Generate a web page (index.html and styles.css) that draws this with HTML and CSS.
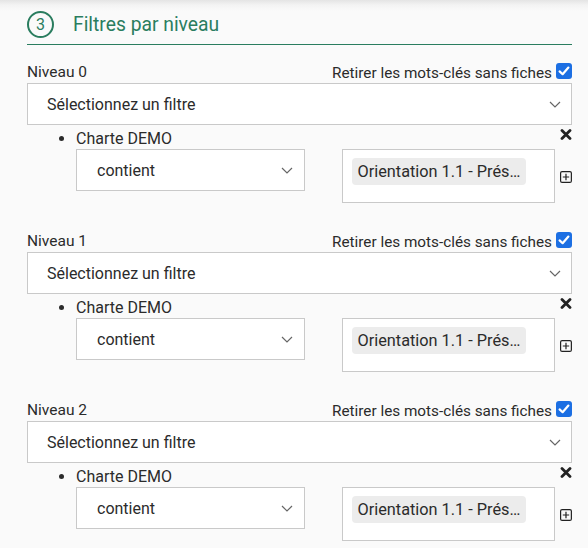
FILE: index.html
```html
<!DOCTYPE html>
<html lang="fr">
<head>
<meta charset="utf-8">
<title>Filtres par niveau</title>
<link rel="stylesheet" href="styles.css">
</head>
<body>
<div class="page">
  <div class="panel">
    <div class="header">
      <span class="step">3</span>
      <h2 class="title">Filtres par niveau</h2>
    </div>

    <div class="level">
      <div class="level-head">
        <span class="level-name">Niveau 0</span>
        <label class="remove">Retirer les mots-clés sans fiches
          <svg class="check" width="16" height="16" viewBox="0 0 16 16"><rect x="0" y="0" width="16" height="16" rx="3" fill="#1c6fe3"/><path d="M3.6 8.4 L6.6 11.2 L12.4 4.6" fill="none" stroke="#fff" stroke-width="2.2" stroke-linecap="round" stroke-linejoin="round"/></svg>
        </label>
      </div>
      <div class="select wide"><span>Sélectionnez un filtre</span><svg class="chev" width="12" height="7" viewBox="0 0 12 7"><path d="M1 1 L6 6 L11 1" fill="none" stroke="#666" stroke-width="1.2"/></svg></div>
      <ul class="rules">
        <li class="rule">
          <div class="rule-name">Charte DEMO</div>
          <svg class="del" width="12" height="11" viewBox="0 0 12 11"><path d="M2 1.5 L10 9.5 M10 1.5 L2 9.5" stroke="#222" stroke-width="2.8" stroke-linecap="round"/></svg>
          <div class="rule-row">
            <div class="select op"><span>contient</span><svg class="chev" width="12" height="7" viewBox="0 0 12 7"><path d="M1 1 L6 6 L11 1" fill="none" stroke="#666" stroke-width="1.2"/></svg></div>
            <div class="values"><span class="tag">Orientation 1.1 - Prés…</span></div>
            <svg class="add" width="12" height="12" viewBox="0 0 12 12"><rect x="0.6" y="0.6" width="10.8" height="10.8" rx="1.5" fill="none" stroke="#222" stroke-width="1.2"/><path d="M6 2.8 V9.2 M2.8 6 H9.2" stroke="#222" stroke-width="1.2"/></svg>
          </div>
        </li>
      </ul>
    </div>

    <div class="level">
      <div class="level-head">
        <span class="level-name">Niveau 1</span>
        <label class="remove">Retirer les mots-clés sans fiches
          <svg class="check" width="16" height="16" viewBox="0 0 16 16"><rect x="0" y="0" width="16" height="16" rx="3" fill="#1c6fe3"/><path d="M3.6 8.4 L6.6 11.2 L12.4 4.6" fill="none" stroke="#fff" stroke-width="2.2" stroke-linecap="round" stroke-linejoin="round"/></svg>
        </label>
      </div>
      <div class="select wide"><span>Sélectionnez un filtre</span><svg class="chev" width="12" height="7" viewBox="0 0 12 7"><path d="M1 1 L6 6 L11 1" fill="none" stroke="#666" stroke-width="1.2"/></svg></div>
      <ul class="rules">
        <li class="rule">
          <div class="rule-name">Charte DEMO</div>
          <svg class="del" width="12" height="11" viewBox="0 0 12 11"><path d="M2 1.5 L10 9.5 M10 1.5 L2 9.5" stroke="#222" stroke-width="2.8" stroke-linecap="round"/></svg>
          <div class="rule-row">
            <div class="select op"><span>contient</span><svg class="chev" width="12" height="7" viewBox="0 0 12 7"><path d="M1 1 L6 6 L11 1" fill="none" stroke="#666" stroke-width="1.2"/></svg></div>
            <div class="values"><span class="tag">Orientation 1.1 - Prés…</span></div>
            <svg class="add" width="12" height="12" viewBox="0 0 12 12"><rect x="0.6" y="0.6" width="10.8" height="10.8" rx="1.5" fill="none" stroke="#222" stroke-width="1.2"/><path d="M6 2.8 V9.2 M2.8 6 H9.2" stroke="#222" stroke-width="1.2"/></svg>
          </div>
        </li>
      </ul>
    </div>

    <div class="level">
      <div class="level-head">
        <span class="level-name">Niveau 2</span>
        <label class="remove">Retirer les mots-clés sans fiches
          <svg class="check" width="16" height="16" viewBox="0 0 16 16"><rect x="0" y="0" width="16" height="16" rx="3" fill="#1c6fe3"/><path d="M3.6 8.4 L6.6 11.2 L12.4 4.6" fill="none" stroke="#fff" stroke-width="2.2" stroke-linecap="round" stroke-linejoin="round"/></svg>
        </label>
      </div>
      <div class="select wide"><span>Sélectionnez un filtre</span><svg class="chev" width="12" height="7" viewBox="0 0 12 7"><path d="M1 1 L6 6 L11 1" fill="none" stroke="#666" stroke-width="1.2"/></svg></div>
      <ul class="rules">
        <li class="rule">
          <div class="rule-name">Charte DEMO</div>
          <svg class="del" width="12" height="11" viewBox="0 0 12 11"><path d="M2 1.5 L10 9.5 M10 1.5 L2 9.5" stroke="#222" stroke-width="2.8" stroke-linecap="round"/></svg>
          <div class="rule-row">
            <div class="select op"><span>contient</span><svg class="chev" width="12" height="7" viewBox="0 0 12 7"><path d="M1 1 L6 6 L11 1" fill="none" stroke="#666" stroke-width="1.2"/></svg></div>
            <div class="values"><span class="tag">Orientation 1.1 - Prés…</span></div>
            <svg class="add" width="12" height="12" viewBox="0 0 12 12"><rect x="0.6" y="0.6" width="10.8" height="10.8" rx="1.5" fill="none" stroke="#222" stroke-width="1.2"/><path d="M6 2.8 V9.2 M2.8 6 H9.2" stroke="#222" stroke-width="1.2"/></svg>
          </div>
        </li>
      </ul>
    </div>
  </div>
</div>
</body>
</html>
```

FILE: styles.css
```css
html, body {
  margin: 0;
  padding: 0;
}
body {
  font-family: Roboto, "Liberation Sans", sans-serif;
  color: #2b2b2b;
  background: #fafafa;
}
.page {
  min-height: 548px;
  background: linear-gradient(to bottom, #e4e4e4 0px, #f3f3f3 5px, #fafafa 11px, #fafafa 100%);
  padding: 11px 16px 0 27px;
}
.panel {
  width: 545px;
}
.header {
  display: flex;
  align-items: center;
  gap: 19px;
  height: 27px;
  padding-bottom: 6px;
  border-bottom: 1.5px solid #2a7d5f;
}
.step {
  box-sizing: border-box;
  width: 27px;
  height: 27px;
  border: 2px solid #2a7d5f;
  border-radius: 50%;
  color: #2a7d5f;
  font-size: 16px;
  display: flex;
  align-items: center;
  justify-content: center;
}
.title {
  margin: 0;
  font-size: 19.3px;
  font-weight: 400;
  color: #2a7d5f;
}
.level {
  padding-top: 16px;
  height: 153px;
}
.level-head {
  display: flex;
  justify-content: space-between;
  align-items: center;
  height: 21px;
}
.level-name {
  font-size: 15.5px;
  line-height: 18px;
}
.remove {
  align-self: flex-end;
  display: flex;
  align-items: flex-end;
  gap: 4px;
  font-size: 15.3px;
  line-height: 17px;
}
.check {
  display: block;
  margin-bottom: 3px;
}
.select {
  box-sizing: border-box;
  display: flex;
  align-items: center;
  justify-content: space-between;
  background: #fff;
  border: 1px solid #c9c9c9;
  font-size: 16px;
  height: 42px;
}
.wide {
  margin-top: 1px;
  padding: 0 10px 0 19px;
}
.chev {
  display: block;
}
.rules {
  margin: 4px 0 0;
  padding: 0 0 0 49px;
  list-style: disc;
}
.rule {
  position: relative;
  font-size: 16px;
}
.rule-name {
  line-height: 17px;
  height: 17px;
}
.del {
  position: absolute;
  right: 0;
  top: 0;
}
.rule-row {
  display: flex;
  align-items: flex-start;
  margin-top: 2px;
}
.op {
  width: 229px;
  padding: 0 11px 0 20px;
}
.values {
  box-sizing: border-box;
  margin-left: 37px;
  width: 214px;
  height: 54px;
  border: 1px solid #c9c9c9;
  background: #fff;
  padding: 8px 9px;
}
.tag {
  display: inline-block;
  background: #ececec;
  border-radius: 4px;
  padding: 0 6px;
  height: 27px;
  line-height: 27px;
  font-size: 16.3px;
}
.add {
  display: block;
  margin: 22px 0 0 5px;
}
```
